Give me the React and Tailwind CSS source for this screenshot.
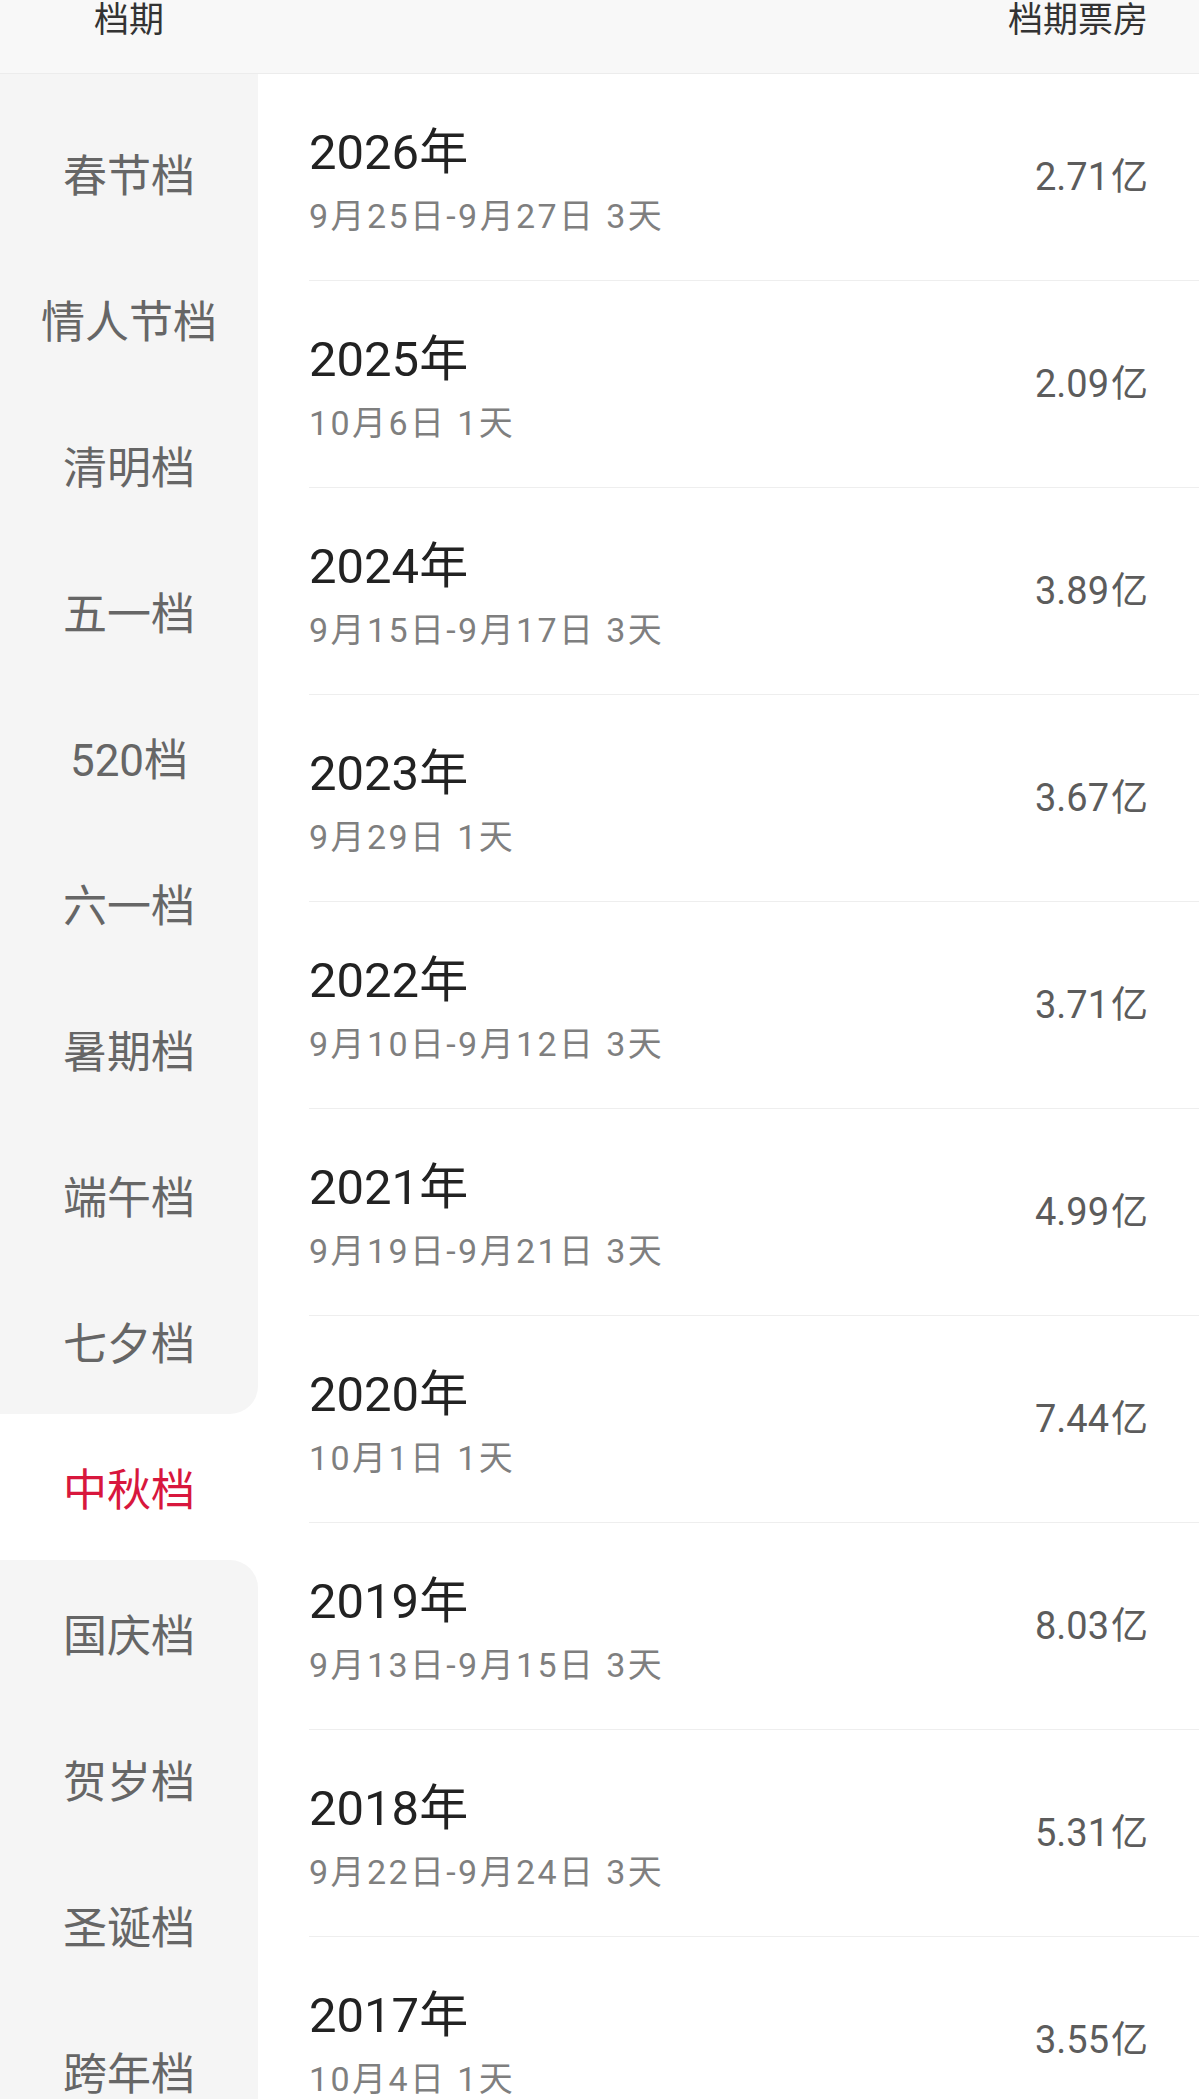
import React from "react";

const FONT = { fontFamily: 'Roboto, "Noto Sans CJK SC", sans-serif' };

const PERIODS = [
  "春节档", "情人节档", "清明档", "五一档", "520档", "六一档", "暑期档",
  "端午档", "七夕档", "中秋档", "国庆档", "贺岁档", "圣诞档", "跨年档",
];

const ROWS = [
  { year: "2026", date: "9月25日-9月27日 3天", box: "2.71" },
  { year: "2025", date: "10月6日 1天", box: "2.09" },
  { year: "2024", date: "9月15日-9月17日 3天", box: "3.89" },
  { year: "2023", date: "9月29日 1天", box: "3.67" },
  { year: "2022", date: "9月10日-9月12日 3天", box: "3.71" },
  { year: "2021", date: "9月19日-9月21日 3天", box: "4.99" },
  { year: "2020", date: "10月1日 1天", box: "7.44" },
  { year: "2019", date: "9月13日-9月15日 3天", box: "8.03" },
  { year: "2018", date: "9月22日-9月24日 3天", box: "5.31" },
  { year: "2017", date: "10月4日 1天", box: "3.55" },
];

const ACTIVE = 9;

export default function App() {
  return (
    <div className="h-[2099px] w-[1199px] overflow-hidden bg-white" style={FONT}>
      {/* 表头 */}
      <div className="flex h-[74px] items-start justify-between border-b border-[#ececec] bg-[#f8f8f8] pr-[51px] pt-[4px]">
        <div className="w-[258px] text-center text-[35px] leading-[34px] text-[#333]">档期</div>
        <div className="text-[35px] leading-[34px] text-[#333]">档期票房</div>
      </div>

      <div className="flex">
        {/* 左侧档期 */}
        <div className="w-[258px] shrink-0 bg-white">
          <div className="h-[26px] bg-[#f5f5f5]" />
          {PERIODS.map((p, i) => {
            const active = i === ACTIVE;
            let cls = "bg-[#f5f5f5] text-[#666]";
            if (active) cls = "bg-white text-[#d8173d]";
            else if (i === ACTIVE - 1) cls += " rounded-br-[28px]";
            else if (i === ACTIVE + 1) cls += " rounded-tr-[28px]";
            return (
              <div key={p} className={`flex h-[146px] items-center justify-center pt-[7px] text-[44px] leading-none ${cls}`}>
                {p}
              </div>
            );
          })}
          <div className="h-[200px] bg-[#f5f5f5]" />
        </div>

        {/* 右侧列表 */}
        <div className="flex-1 pl-[51px]">
          {ROWS.map((r) => (
            <div key={r.year} className="flex h-[207px] items-center justify-between border-b border-[#eeeeee] pr-[51px]">
              <div className="flex flex-col pt-[8px]">
                <div className="text-[49px] leading-[56px] text-[#222]">{r.year}年</div>
                <div className="mt-[14px] text-[34px] leading-[42px] tracking-[2.4px] text-[#7f7f7f]">{r.date}</div>
              </div>
              <div className="flex items-baseline text-[38px] text-[#5c5c5c]">
                <span>{r.box}</span>
                <span className="ml-[2px] text-[37px]">亿</span>
              </div>
            </div>
          ))}
        </div>
      </div>
    </div>
  );
}
